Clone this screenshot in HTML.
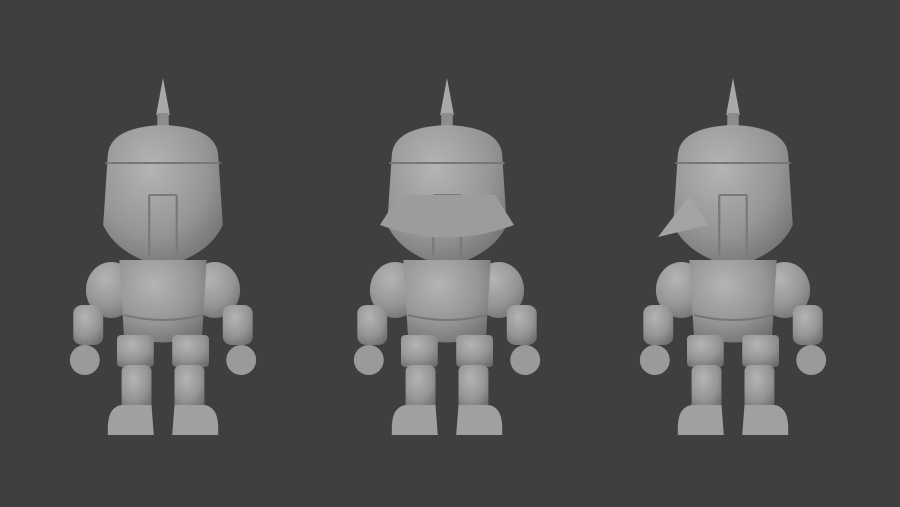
<!DOCTYPE html>
<html><head><meta charset="utf-8"><style>
html,body{margin:0;padding:0;background:#3f3f3f;}
svg{display:block}
</style></head><body>
<svg width="900" height="507" viewBox="0 0 900 507" xmlns="http://www.w3.org/2000/svg">
<defs>
<radialGradient id="g" cx="0.4" cy="0.3" r="0.8">
<stop offset="0" stop-color="#b4b4b4"/><stop offset="0.6" stop-color="#959595"/><stop offset="1" stop-color="#6e6e6e"/>
</radialGradient>
<g id="knight">
<path d="M0,-107 L-6,-70 L6,-70 Z" fill="#a8a8a8"/>
<rect x="-5" y="-72" width="10" height="14" fill="#8c8c8c"/>
<path d="M-48,-30 Q-46,-58 0,-60 Q46,-58 48,-30 L52,40 Q40,70 0,82 Q-40,70 -52,40 Z" fill="url(#g)"/>
<path d="M-50,-22 L50,-22" stroke="#777" stroke-width="2"/>
<path d="M-12,10 L-12,70 M12,10 L12,70 M-12,10 L12,10" stroke="#7a7a7a" stroke-width="2" fill="none"/>
<ellipse cx="-45" cy="105" rx="22" ry="28" fill="url(#g)"/>
<ellipse cx="45" cy="105" rx="22" ry="28" fill="url(#g)"/>
<path d="M-38,75 L38,75 L34,150 Q0,165 -34,150 Z" fill="url(#g)"/>
<path d="M-34,130 Q0,140 34,130" stroke="#777" stroke-width="2" fill="none"/>
<rect x="-78" y="120" width="26" height="40" rx="8" fill="url(#g)"/>
<rect x="52" y="120" width="26" height="40" rx="8" fill="url(#g)"/>
<ellipse cx="-68" cy="175" rx="13" ry="15" fill="#9a9a9a"/>
<ellipse cx="68" cy="175" rx="13" ry="15" fill="#9a9a9a"/>
<rect x="-40" y="150" width="32" height="32" rx="4" fill="url(#g)"/>
<rect x="8" y="150" width="32" height="32" rx="4" fill="url(#g)"/>
<rect x="-36" y="180" width="26" height="45" rx="6" fill="url(#g)"/>
<rect x="10" y="180" width="26" height="45" rx="6" fill="url(#g)"/>
<path d="M-48,243 Q-48,222 -36,220 L-10,220 L-8,250 L-48,250 Z" fill="#a0a0a0"/>
<path d="M48,243 Q48,222 36,220 L10,220 L8,250 L48,250 Z" fill="#a0a0a0"/>
</g>
</defs>
<rect width="900" height="507" fill="#3f3f3f"/>
<use href="#knight" transform="translate(163,185) scale(1.15,1)"/>
<use href="#knight" transform="translate(447,185) scale(1.15,1)"/>
<use href="#knight" transform="translate(733,185) scale(1.15,1)"/>
<path d="M380,225 Q447,250 514,225 L495,195 L399,195 Z" fill="#9c9c9c"/>
<path d="M658,237 L690,195 L708,225 Z" fill="#a4a4a4"/>
</svg>
</body></html>
